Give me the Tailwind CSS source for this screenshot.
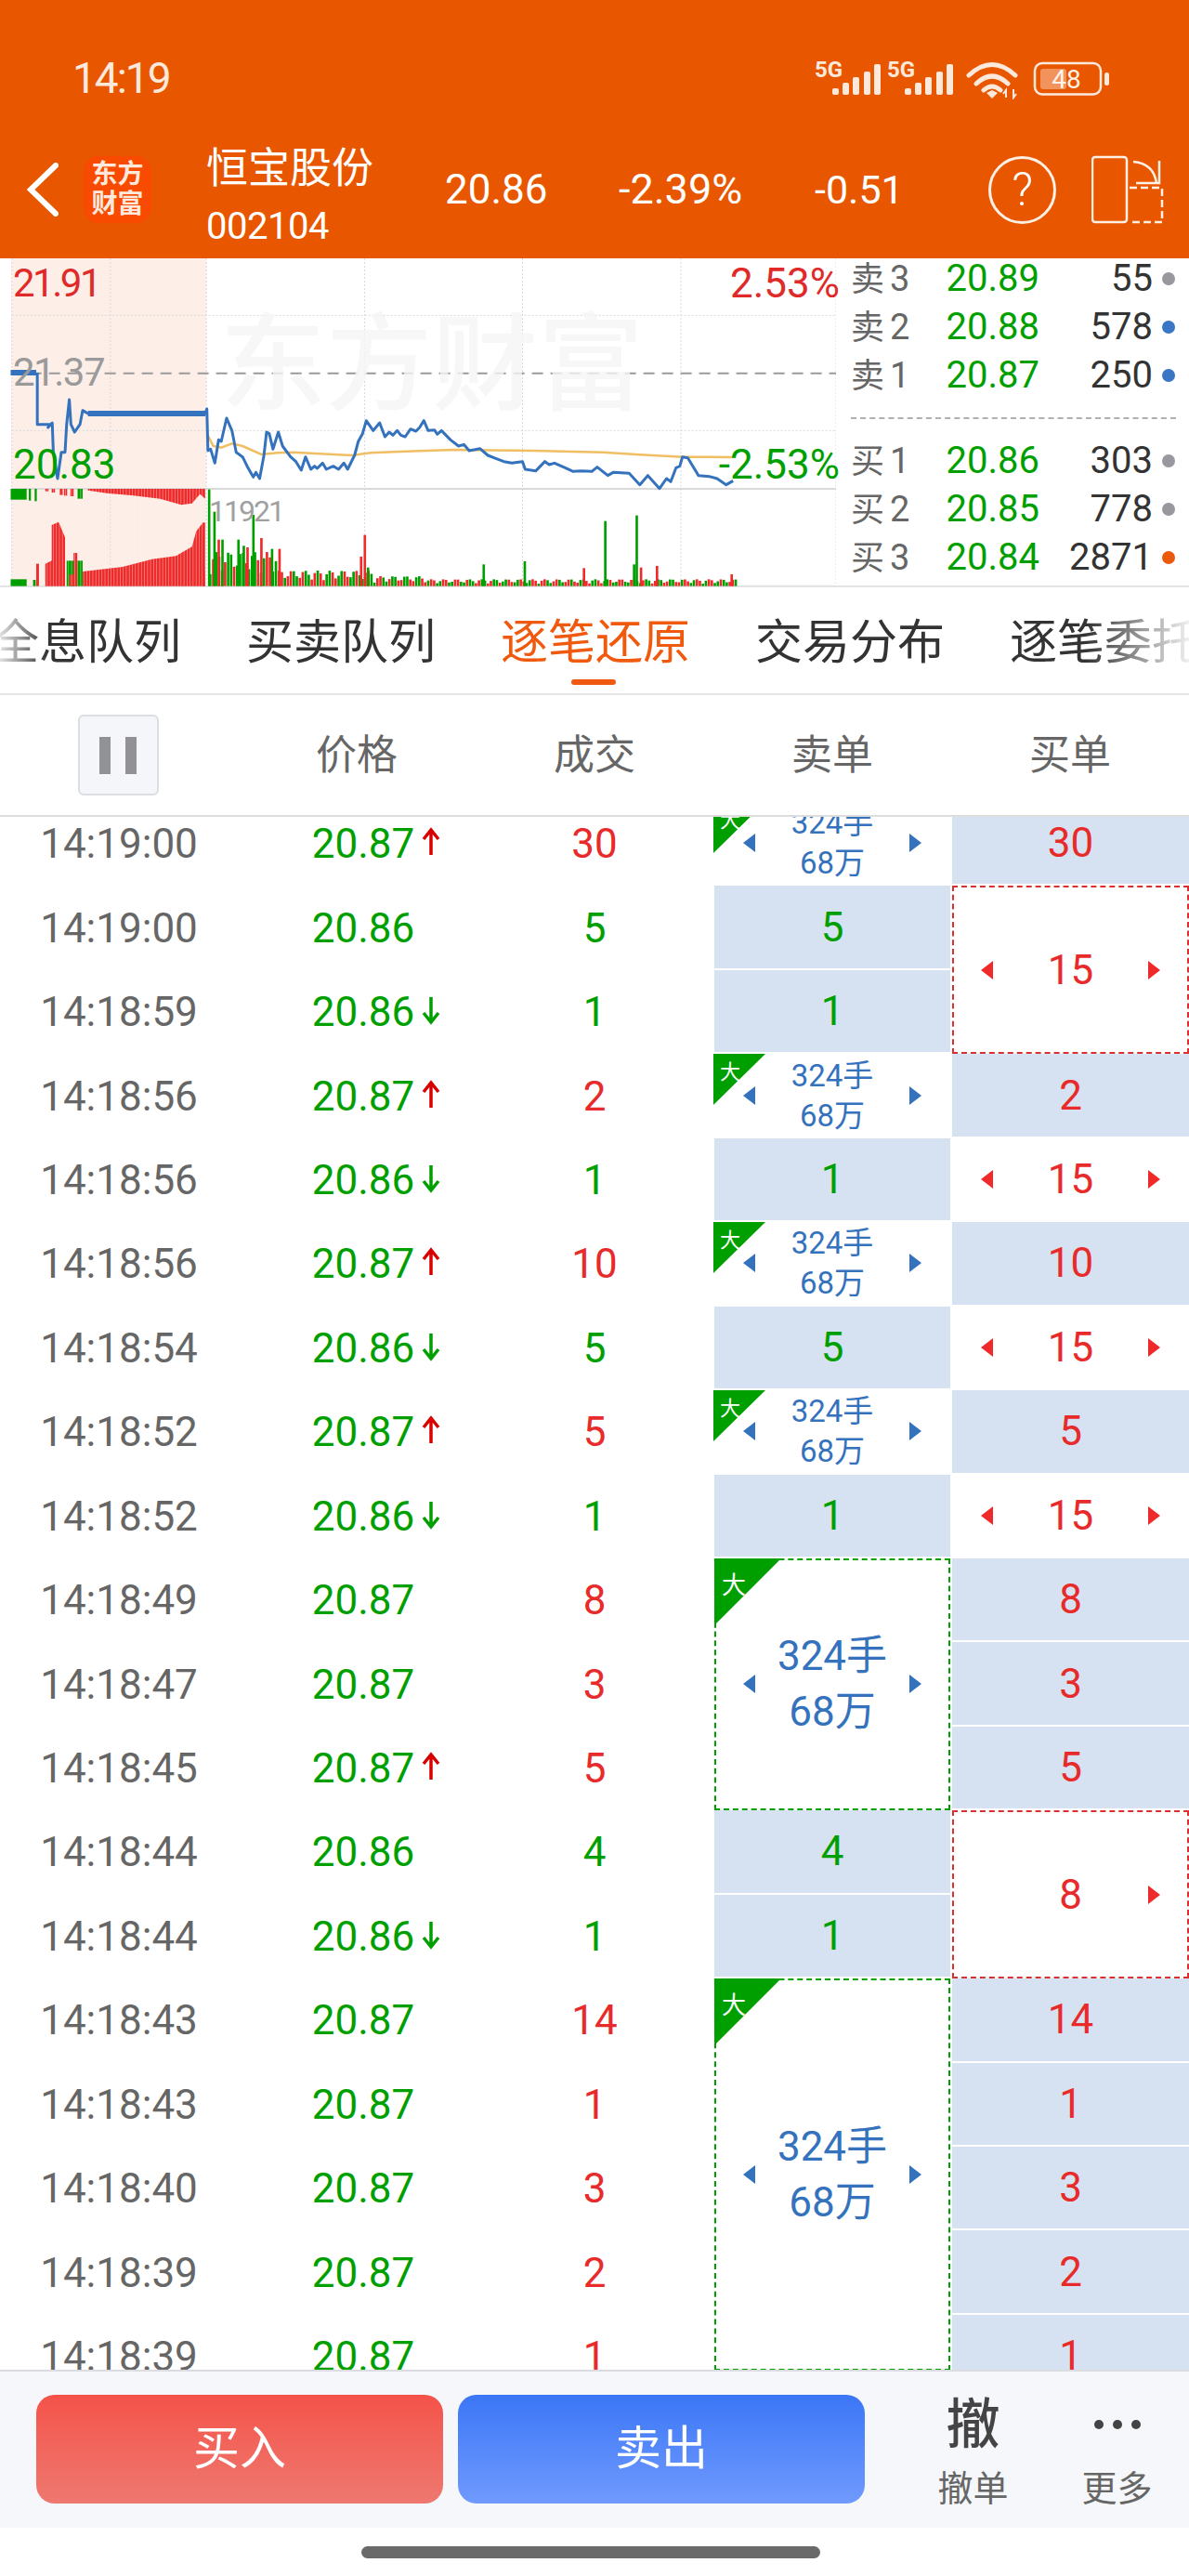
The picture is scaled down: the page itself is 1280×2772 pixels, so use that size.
<!DOCTYPE html>
<html lang="zh-CN">
<head>
  <meta charset="UTF-8" />
  <meta name="viewport" content="width=device-width, initial-scale=1.0" />
  <title>逐笔还原</title>
  <script src="https://cdn.jsdelivr.net/npm/@tailwindcss/browser@4"></script>
</head>
<body class="bg-white w-[1280px] h-[2772px] overflow-hidden font-[Roboto,'Noto_Sans_CJK_SC',sans-serif]">

  <!-- Orange header -->
  <header class="bg-[#E85700] h-[278px] text-white">
    <div class="flex justify-between h-[150px] pl-[78px] pr-[86px] pt-[60px]">
      <span class="text-[46px] leading-[48px] tracking-[-2px] text-[#FCE9DC]">14:19</span>
      <svg width="318" height="47" viewBox="876 60 318 47" fill="#FCE9DC">
        <text x="877" y="83" font-size="24" font-weight="700" font-family="Roboto">5G</text>
        <rect x="896" y="95" width="7" height="7" rx="2"/><rect x="907" y="89" width="7" height="13" rx="2"/><rect x="918" y="83" width="7" height="19" rx="2"/><rect x="930" y="77" width="7" height="25" rx="2"/><rect x="941" y="69" width="7" height="33" rx="2"/>
        <text x="955" y="83" font-size="24" font-weight="700" font-family="Roboto">5G</text>
        <rect x="974" y="95" width="7" height="7" rx="2"/><rect x="985" y="89" width="7" height="13" rx="2"/><rect x="996" y="83" width="7" height="19" rx="2"/><rect x="1008" y="77" width="7" height="25" rx="2"/><rect x="1019" y="69" width="7" height="33" rx="2"/>
        <path d="M1043 81Q1068 58 1093 81M1051 90Q1068 74 1085 90M1059 97Q1068 89 1077 97" fill="none" stroke="#FCE9DC" stroke-width="5" stroke-linecap="round"/>
        <path d="M1062 100L1068 97L1074 100L1068 106Z"/>
        <path d="M1083 105V97L1080 101M1091 96V105L1094 101" fill="none" stroke="#FCE9DC" stroke-width="2"/>
        <rect x="1114" y="68" width="71" height="33.5" rx="8" fill="none" stroke="#FCE9DC" stroke-width="2.5"/>
        <rect x="1120" y="74" width="28" height="22" rx="3" fill="#F3935C"/>
        <rect x="1189" y="78" width="5" height="14" rx="2.5"/>
        <text x="1148" y="95" font-size="28" text-anchor="middle" font-family="Roboto" fill="#FFF3EA">48</text>
      </svg>
    </div>
    <nav class="flex items-center h-[108px]">
      <svg width="34" height="58" viewBox="0 0 34 58" class="ml-[29px] shrink-0"><path d="M31 3L4 29L31 55" fill="none" stroke="#FFFFFF" stroke-width="6" stroke-linecap="round"/></svg>
      <div class="ml-[27px] w-[73px] h-[72px] shrink-0 rounded-[16px] bg-[#F84A00] flex flex-col items-center justify-center text-[28px] leading-[32px] font-bold text-[#FFE9DC]">
        <span>东方</span><span>财富</span>
      </div>
      <div class="ml-[59px] w-[259px] shrink-0 mt-[12px] flex flex-col">
        <span class="text-[45px] leading-[58px]">恒宝股份</span>
        <span class="mt-[10px] text-[40px] leading-[46px] tracking-[-0.5px]">002104</span>
      </div>
      <span class="w-[187px] shrink-0 -ml-[2px] text-[44px]">20.86</span>
      <span class="w-[211px] shrink-0 text-[45px]">-2.39%</span>
      <span class="w-[187px] shrink-0 text-[43px]">-0.51</span>
      <div class="w-[73px] h-[73px] shrink-0 rounded-full border-[3px] border-[#FFF0E6] flex items-center justify-center text-[50px] font-light">?</div>
      <svg width="78" height="74" viewBox="1175 167 78 74" class="ml-[38px] shrink-0" fill="none" stroke="#FFF0E6" stroke-width="2.5">
        <rect x="1176" y="169" width="37" height="70" rx="3"/>
        <path d="M1220 174Q1242 176 1245 197M1248 173V197H1223"/>
        <path d="M1216 202H1251V239H1216" stroke-dasharray="8 4"/>
      </svg>
    </nav>
  </header>

  <!-- Chart + order book -->
  <section class="flex h-[354px] border-b-2 border-[#E4E4E4] relative">
    <div class="relative w-[905px] shrink-0 h-[352px]">
      <svg id="chart" class="absolute left-0 top-[-8px]" width="900" height="370" viewBox="0 0 1568 1110" preserveAspectRatio="none">
        <rect x="22" y="24" width="365" height="1058" fill="#FDEEE8"/>
        <path d="M22 24V1082M207 24V1082M387 24V1082M684 24V1082M980 24V1082M1277 24V1082M1568 24V1082M22 208H1568M22 580H1568" stroke="#D8D8D8" stroke-width="1" stroke-dasharray="2 2" vector-effect="non-scaling-stroke"/>
        <path d="M22 395H1568" stroke="#9A9A9A" stroke-width="2" stroke-dasharray="12 8" vector-effect="non-scaling-stroke"/>
        <path d="M22 768H1568" stroke="#D9D9D9" stroke-width="2" vector-effect="non-scaling-stroke"/>
        <path d="M22 1082H1568" stroke="#E4E4E4" stroke-width="2" vector-effect="non-scaling-stroke"/>
        <g id="volBars"></g>
        <polyline fill="none" stroke="#F2BE63" stroke-width="2.5" vector-effect="non-scaling-stroke" points="388,590 400,630 415,635 435,622 455,630 490,657 520,652 550,650 600,655 660,660 695,652 750,648 850,642 1000,645 1130,650 1200,658 1280,665 1375,666"/>
        <polyline fill="none" stroke="#3572BE" stroke-width="3" stroke-linejoin="round" vector-effect="non-scaling-stroke" points="70,393 70,560 95,560 90,570 98,555 100,650 108,735 115,650 122,650 125,560 130,480 133,560 140,585 150,560 155,515 165,525 385,525 388,510 390,645 395,640 403,685 410,610 415,615 425,540 435,580 443,650 455,665 465,700 475,730 480,715 487,735 495,660 500,585 505,590 512,640 522,585 530,630 545,665 555,680 565,708 573,665 583,705 590,695 595,702 605,685 612,705 625,695 635,705 645,685 652,705 665,660 672,615 680,590 687,548 700,580 712,555 722,600 730,585 737,595 745,580 752,595 760,600 770,575 780,582 787,570 795,548 803,580 815,578 820,592 828,580 845,610 860,630 870,625 880,645 900,638 915,660 930,670 945,680 960,685 980,680 985,705 1005,710 1022,680 1030,690 1040,685 1060,700 1075,712 1090,710 1110,712 1120,698 1140,725 1150,715 1180,718 1200,755 1215,725 1237,767 1250,735 1258,745 1268,700 1275,695 1280,665 1290,668 1310,725 1330,728 1345,735 1362,755 1375,742"/>
        <path d="M20 393H68M165 525H385" stroke="#3572BE" stroke-width="6" vector-effect="non-scaling-stroke"/>
      </svg>
      <div class="absolute left-[237px] top-[51px] text-[114px] leading-[128px] font-medium text-[#F5F5F5]/80 whitespace-nowrap">东方财富</div>
      <span class="absolute left-[14px] top-[3px] text-[42px] leading-[48px] tracking-[-2.5px] text-[#E02A2A]">21.91</span>
      <span class="absolute left-[14px] top-[99px] text-[42px] leading-[48px] tracking-[-1.5px] text-[#9A9A9A]">21.37</span>
      <span class="absolute left-[14px] top-[197px] text-[44px] leading-[50px] text-[#009F00]">20.83</span>
      <span class="absolute right-[1px] top-[3px] text-[44px] leading-[48px] text-[#E02A2A]">2.53%</span>
      <span class="absolute right-[1px] top-[197px] text-[44px] leading-[50px] text-[#009F00]">-2.53%</span>
      <span class="absolute left-[225px] top-[254px] text-[32px] leading-[36px] tracking-[-2px] text-[#A0A0A0]">11921</span>
    </div>
    <div id="book" class="pl-[11px] -mt-[4px]"></div>
  </section>

  <!-- Tabs -->
  <div class="relative h-[116px] pt-[6px] border-b-2 border-[#E6E6E6] flex items-center gap-[70px] -ml-[9px] overflow-hidden text-[51px] text-[#333333] whitespace-nowrap">
    <span>全息队列</span>
    <span>买卖队列</span>
    <span class="relative text-[#F05A0F]">逐笔还原<i class="absolute left-[76px] top-[77px] w-[48px] h-[6px] rounded-full bg-[#F05A0F]"></i></span>
    <span>交易分布</span>
    <span class="shrink-0">逐笔委托</span>
    <div class="absolute left-0 top-0 w-[60px] h-full bg-linear-to-r from-white to-transparent"></div>
    <div class="absolute right-[-9px] top-0 w-[120px] h-full bg-linear-to-l from-white to-transparent"></div>
  </div>

  <!-- Table header -->
  <div class="grid grid-cols-5 h-[131px] border-b-2 border-[#DDDDDD] items-center text-center text-[44px] text-[#666666]">
    <div class="flex justify-center">
      <div class="w-[87px] h-[87px] -ml-[2px] box-border rounded-[6px] border-2 border-[#DDDEE3] bg-[#F5F6FA] flex items-center justify-center gap-[16px]">
        <i class="block w-[12px] h-[40px] bg-[#929296]"></i><i class="block w-[12px] h-[40px] bg-[#929296]"></i>
      </div>
    </div>
    <div>价格</div><div>成交</div><div>卖单</div><div>买单</div>
  </div>

  <!-- Tick list -->
  <div class="h-[1671px] overflow-hidden">
    <div id="ticks" class="grid -mt-[16px] grid-cols-[256px_270px_228px_15px_254px_2px_255px] grid-rows-[repeat(19,90.44px)] text-[44px]"></div>
  </div>

  <!-- Bottom bar -->
  <footer class="h-[170px] box-border border-t-2 border-[#DADCE0] bg-[#F5F7FA] flex pl-[39px] pt-[25px]">
    <button class="w-[438px] h-[117px] rounded-[20px] bg-linear-to-b from-[#F45249] to-[#EE7870] text-white text-[50px]">买入</button>
    <button class="ml-[16px] w-[438px] h-[117px] rounded-[20px] bg-linear-to-b from-[#3B76F6] to-[#709AFE] text-white text-[50px]">卖出</button>
    <div class="ml-[39px] w-[155px] flex flex-col items-center">
      <span class="text-[58px] leading-[64px] font-medium text-[#444444]">撤</span>
      <span class="mt-[17px] text-[38px] leading-[40px] text-[#666666]">撤单</span>
    </div>
    <div class="w-[155px] flex flex-col items-center">
      <div class="h-[64px] flex items-center gap-[10px]"><i class="block w-[10px] h-[10px] rounded-full bg-[#444444]"></i><i class="block w-[10px] h-[10px] rounded-full bg-[#444444]"></i><i class="block w-[10px] h-[10px] rounded-full bg-[#444444]"></i></div>
      <span class="mt-[17px] text-[38px] leading-[40px] text-[#666666]">更多</span>
    </div>
  </footer>
  <div class="flex justify-center pt-[20px] pr-[8px]"><div class="w-[494px] h-[13px] rounded-full bg-[#6A6A6A]"></div></div>

  <script>
    // Order book
    const book = [
      ["卖", 3, "20.89", 55, "bg-[#98989E]"],
      ["卖", 2, "20.88", 578, "bg-[#3A76C4]"],
      ["卖", 1, "20.87", 250, "bg-[#3A76C4]"],
      null,
      ["买", 1, "20.86", 303, "bg-[#98989E]"],
      ["买", 2, "20.85", 778, "bg-[#98989E]"],
      ["买", 3, "20.84", 2871, "bg-[#EB5A0C]"]
    ];
    document.getElementById("book").innerHTML = book.map(b => {
      if (!b) return '<div class="h-[40px] flex items-center"><div class="w-[350px] border-t-2 border-dashed border-[#B0B0B0]"></div></div>';
      return `<div class="flex items-center h-[52px]">
        <div class="w-[203px] flex justify-between items-center">
          <span class="text-[#666666]"><span class="text-[36px]">${b[0]}</span><span class="text-[38px] ml-[6px]">${b[1]}</span></span>
          <span class="text-[40px] text-[#009F00]">${b[2]}</span>
        </div>
        <span class="w-[122px] text-right text-[40px] text-[#333333]">${b[3]}</span>
        <i class="block ml-[10px] w-[14px] h-[14px] rounded-full ${b[4]}"></i>
      </div>`;
    }).join("");

    // Volume bars, coordinates in the chart's viewBox
    const RED = "#EE2A2A", GREEN = "#009F00";
    let bars = "";
    const rect = (x, y, w, h, c) => { bars += `<rect x="${x}" y="${y}" width="${w}" height="${h}" fill="${c}"/>`; };
    const poly = (pts, c) => { bars += `<polygon points="${pts}" fill="${c}"/>`; };

    poly("165,768 385,768 385,800 375,785 360,815 340,820 300,800 250,790 200,782 165,773", RED);
    rect(20, 768, 30, 35, GREEN); rect(54, 768, 4, 38, GREEN); rect(65, 768, 4, 40, GREEN);
    [[85, 8], [97, 12], [112, 20], [120, 22], [132, 24]].forEach(b => rect(b[0], 768, 6, b[1], RED));
    rect(145, 768, 10, 32, GREEN);

    rect(20, 1060, 30, 22, GREEN); rect(62, 1062, 5, 20, GREEN); rect(68, 1010, 5, 72, RED);
    poly("85,1082 85,1010 97,1000 97,885 110,875 122,925 122,1082", RED);
    rect(125, 1000, 30, 82, GREEN); rect(130, 1045, 8, 37, RED); rect(138, 975, 7, 107, RED);
    poly("155,1082 155,1035 230,1020 285,995 330,985 360,955 368,905 380,878 385,1082", RED);
    // thin light gaps so the auction area reads as separate bars
    for (let x = 88; x < 385; x += 5.7) {
      bars += `<rect x="${x}" y="768" width="1.2" height="314" fill="#FDEEE8" opacity="0.55"/>`;
    }

    let i = 0;
    for (let x = 392; x < 1378; x += 5.6, i++) {
      const base = x < 520 ? 110 : x < 700 ? 50 : x < 800 ? 32 : 22;
      const h = base * (0.35 + 0.65 * Math.abs(Math.sin(i * 2.399)));
      const greenBias = x < 520 ? 0.4 : 0;
      rect(x, 1082 - h, 4.6, h, Math.sin(i * 1.7) > greenBias ? RED : GREEN);
    }
    [[380, 205, RED], [390, 312, GREEN], [400, 240, GREEN], [408, 150, RED], [415, 150, GREEN], [445, 150, GREEN], [455, 130, GREEN],
     [462, 125, RED], [473, 230, GREEN], [488, 155, RED], [508, 120, GREEN], [522, 120, RED], [675, 95, RED], [682, 165, RED],
     [688, 60, GREEN], [905, 70, GREEN], [982, 80, GREEN], [1133, 210, GREEN], [1187, 70, GREEN], [1192, 228, GREEN],
     [1200, 60, RED], [1230, 65, RED], [1093, 58, RED], [1370, 38, RED]].forEach(s => rect(s[0], 1082 - s[1], 4.6, s[1], s[2]));
    document.getElementById("volBars").innerHTML = bars;

    // Tick rows: time, price, arrow, volume
    const ticks = [
      ["14:19:00", "20.87", "up", 30], ["14:19:00", "20.86", "", 5], ["14:18:59", "20.86", "down", 1],
      ["14:18:56", "20.87", "up", 2], ["14:18:56", "20.86", "down", 1], ["14:18:56", "20.87", "up", 10],
      ["14:18:54", "20.86", "down", 5], ["14:18:52", "20.87", "up", 5], ["14:18:52", "20.86", "down", 1],
      ["14:18:49", "20.87", "", 8], ["14:18:47", "20.87", "", 3], ["14:18:45", "20.87", "up", 5],
      ["14:18:44", "20.86", "", 4], ["14:18:44", "20.86", "down", 1], ["14:18:43", "20.87", "", 14],
      ["14:18:43", "20.87", "", 1], ["14:18:40", "20.87", "", 3], ["14:18:39", "20.87", "", 2], ["14:18:39", "20.87", "", 1]
    ];
    const arrows = {
      "": "",
      up: '<svg class="absolute left-full ml-[8px] top-[15px]" width="20" height="32" viewBox="0 0 20 32"><path d="M10 30V4M2 13L10 3L18 13" fill="none" stroke="#D90000" stroke-width="3.5"/></svg>',
      down: '<svg class="absolute left-full ml-[8px] top-[15px]" width="20" height="32" viewBox="0 0 20 32"><path d="M10 2V28M2 19L10 29L18 19" fill="none" stroke="#009F00" stroke-width="3.5"/></svg>'
    };
    const triL = c => `<svg width="13" height="20" viewBox="0 0 13 20"><path d="M13 0V20L0 10Z" fill="${c}"/></svg>`;
    const triR = c => `<svg width="13" height="20" viewBox="0 0 13 20"><path d="M0 0V20L13 10Z" fill="${c}"/></svg>`;
    const gap = '<i class="block w-[13px]"></i>';
    const BLUE = "#3572BE";

    let html = "";
    ticks.forEach((t, n) => {
      const row = n + 1;
      const isUp = t[1] === "20.87";
      html += `<div class="flex items-center justify-center text-[#666666]" style="grid-row:${row};grid-column:1">${t[0]}</div>`;
      html += `<div class="flex items-center justify-center text-[#009F00]" style="grid-row:${row};grid-column:2"><span class="relative">${t[1]}${arrows[t[2]]}</span></div>`;
      html += `<div class="flex items-center justify-center ${isUp ? "text-[#E82A2A]" : "text-[#009F00]"}" style="grid-row:${row};grid-column:3">${t[3]}</div>`;
    });

    // Sell column is grid column 5, buy column is 7
    const cell = (row, col, v, colour) =>
      `<div class="bg-[#D6E2F1] mb-[2px] flex items-center justify-center ${colour}" style="grid-row:${row};grid-column:${col}">${v}</div>`;
    const small = (row) =>
      `<div class="relative mb-[2px] flex items-center justify-between px-[31px] text-[#3572BE]" style="grid-row:${row};grid-column:5">
        <svg class="absolute left-[-1px] top-0" width="56" height="55" viewBox="0 0 56 55"><polygon points="0,0 56,0 0,55" fill="#009F00"/><text x="7" y="27" font-size="22" fill="#FFFFFF" font-family="Noto Sans CJK SC">大</text></svg>
        ${triL(BLUE)}<div class="text-center text-[33px] leading-[43px]">324手<br>68万</div>${triR(BLUE)}
      </div>`;
    const large = (row, span, h) =>
      `<div class="relative box-border border-2 border-dashed border-[#009F00] flex items-center justify-between px-[29px] text-[#3572BE] self-start" style="grid-row:${row} / span ${span};grid-column:5;height:${h}px">
        <svg class="absolute left-[-2px] top-[-2px]" width="72" height="72" viewBox="0 0 72 72"><polygon points="0,0 72,0 0,72" fill="#009F00"/><text x="8" y="38" font-size="26" fill="#FFFFFF" font-family="Noto Sans CJK SC">大</text></svg>
        ${triL(BLUE)}<div class="text-center text-[44px] leading-[60px]">324手<br>68万</div>${triR(BLUE)}
      </div>`;
    const G = "text-[#009F00]", R = "text-[#E82A2A]";
    html += small(1) + cell(2, 5, 5, G) + cell(3, 5, 1, G) + small(4) + cell(5, 5, 1, G) + small(6) + cell(7, 5, 5, G) + small(8) + cell(9, 5, 1, G);
    html += large(10, 3, 271) + cell(13, 5, 4, G) + cell(14, 5, 1, G) + large(15, 5, 422);

    // Buy column
    const RT = "#EE2A2A";
    const single = (row) =>
      `<div class="mb-[2px] flex items-center justify-between px-[31px] text-[#E82A2A]" style="grid-row:${row};grid-column:7">${triL(RT)}<span>15</span>${triR(RT)}</div>`;
    const dashed = (row, v, left) =>
      `<div class="box-border border-2 border-dashed border-[#DA3030] flex items-center justify-between px-[29px] text-[#E82A2A]" style="grid-row:${row} / span 2;grid-column:7">${left ? triL(RT) : gap}<span>${v}</span>${triR(RT)}</div>`;
    html += cell(1, 7, 30, R) + dashed(2, 15, true) + cell(4, 7, 2, R) + single(5) + cell(6, 7, 10, R) + single(7) + cell(8, 7, 5, R) + single(9);
    html += cell(10, 7, 8, R) + cell(11, 7, 3, R) + cell(12, 7, 5, R) + dashed(13, 8, false);
    [14, 1, 3, 2, 1].forEach((v, k) => { html += cell(15 + k, 7, v, R); });
    document.getElementById("ticks").innerHTML = html;
  </script>
</body>
</html>
